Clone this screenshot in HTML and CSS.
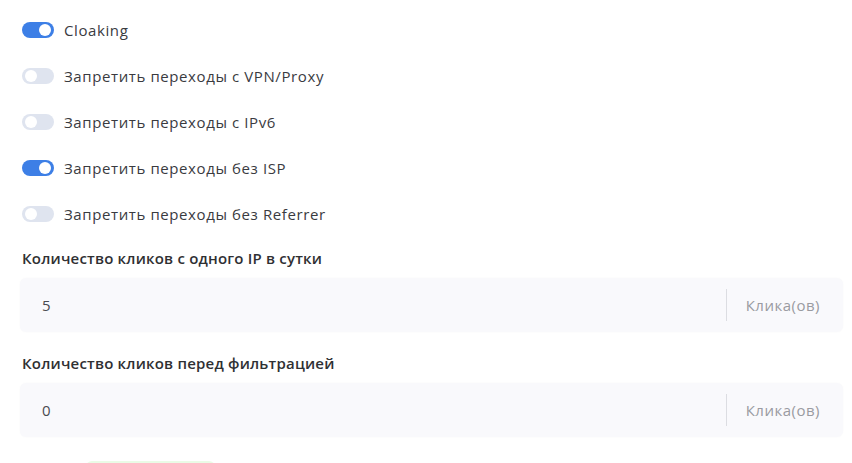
FILE: index.html
```html
<!DOCTYPE html>
<html lang="ru">
  <head>
    <meta charset="UTF-8" />
    <meta name="viewport" content="width=device-width, initial-scale=1.0" />
    <title>Настройки фильтрации</title>
    <link rel="stylesheet" href="styles.css">
  </head>
  <body>
    <div class="settings">
      <!-- Switches -->
      <div class="switch-list">
        <label class="switch-row">
          <span class="switch on"></span>
          <span class="switch-text">Cloaking</span>
        </label>
        <label class="switch-row">
          <span class="switch"></span>
          <span class="switch-text">Запретить переходы с VPN/Proxy</span>
        </label>
        <label class="switch-row">
          <span class="switch"></span>
          <span class="switch-text">Запретить переходы с IPv6</span>
        </label>
        <label class="switch-row">
          <span class="switch on"></span>
          <span class="switch-text">Запретить переходы без ISP</span>
        </label>
        <label class="switch-row">
          <span class="switch"></span>
          <span class="switch-text">Запретить переходы без Referrer</span>
        </label>
      </div>

      <!-- Numeric fields -->
      <div class="field">
        <div class="field-label">Количество кликов с одного IP в сутки</div>
        <div class="input-group">
          <input class="input" type="text" value="5" />
          <span class="input-unit">Клика(ов)</span>
        </div>
      </div>

      <div class="field">
        <div class="field-label">Количество кликов перед фильтрацией</div>
        <div class="input-group">
          <input class="input" type="text" value="0" />
          <span class="input-unit">Клика(ов)</span>
        </div>
      </div>

      <div class="actions">
        <button class="save-btn" title="Сохранить"></button>
      </div>
    </div>
  </body>
</html>
```

FILE: styles.css
```css
body {
  margin: 0;
  background: #fff;
  font-family: "Open Sans", "Noto Sans", sans-serif;
  color: #2f3033;
  overflow: hidden;
}
.settings {
  padding: 22px 9px 0 20px;
}
.switch-list {
  display: flex;
  flex-direction: column;
  gap: 30px;
  padding-left: 2px;
}
.switch-row {
  display: flex;
  align-items: center;
  gap: 10px;
  height: 16px;
  font-size: 15px;
  letter-spacing: 0.6px;
  color: #3a3b3f;
}
.switch {
  position: relative;
  width: 32px;
  height: 16px;
  border-radius: 8px;
  background: #dfe4ef;
  flex-shrink: 0;
}
.switch::after {
  content: "";
  position: absolute;
  top: 2px;
  left: 3px;
  width: 12px;
  height: 12px;
  border-radius: 50%;
  background: #fff;
}
.switch.on {
  background: #3d7fe6;
}
.switch.on::after {
  left: auto;
  right: 3px;
}
.field {
  margin-top: 26px;
}
.field + .field {
  margin-top: 21px;
}
.field-label {
  padding-left: 2px;
  font-size: 15px;
  font-weight: 600;
  letter-spacing: 0.2px;
  color: #2f3033;
  margin-bottom: 10px;
}
.input-group {
  display: flex;
  align-items: center;
  height: 54px;
  background: #f9f9fc;
  border-radius: 6px;
  box-shadow: 0 0 2px rgba(0, 0, 0, 0.03);
}
.input {
  flex: 1;
  min-width: 0;
  height: 100%;
  border: none;
  background: transparent;
  padding: 0 0 0 22px;
  font-family: inherit;
  font-size: 15px;
  color: #4a4b50;
  outline: none;
}
.input-unit {
  border-left: 1px solid #dcdde2;
  height: 32px;
  line-height: 32px;
  padding: 0 23px 0 19px;
  font-size: 15px;
  letter-spacing: 0.5px;
  color: #9a9ba1;
}
.actions {
  padding-left: 66px;
  margin-top: 24px;
}
.save-btn {
  display: block;
  width: 129px;
  height: 40px;
  border: none;
  border-radius: 6px;
  background: #eafbe6;
}
```
